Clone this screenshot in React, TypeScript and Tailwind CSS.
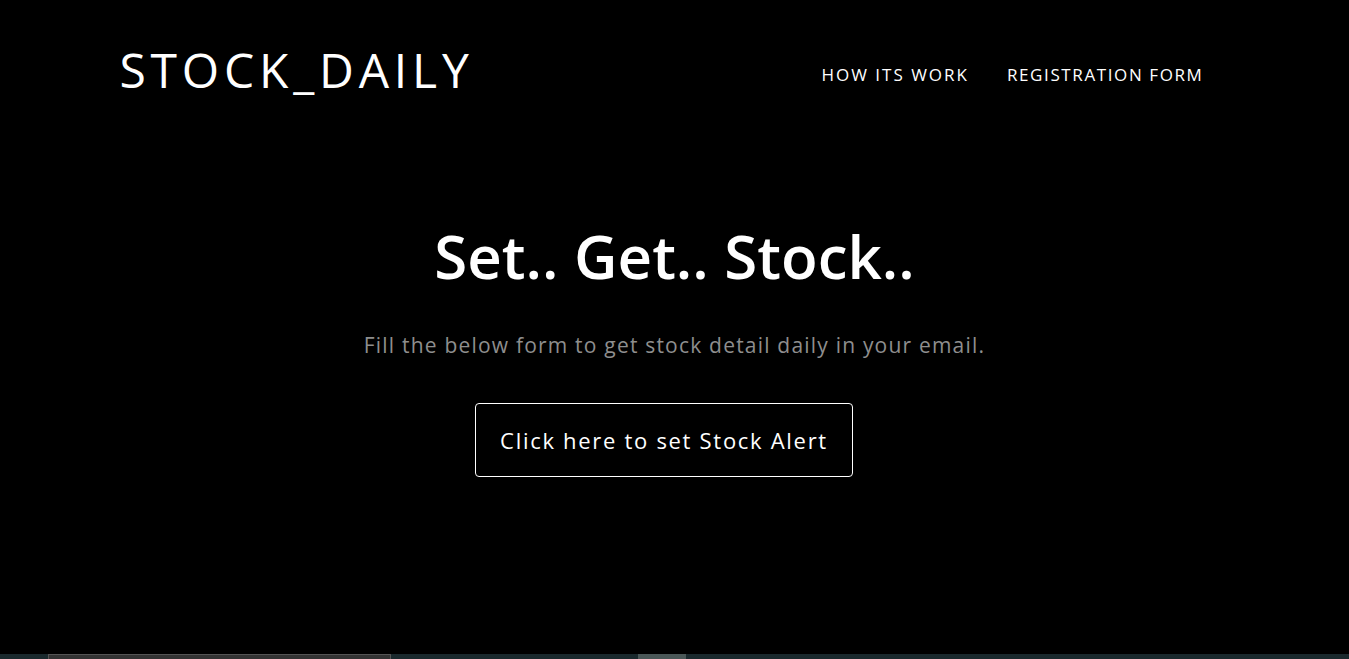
import React from 'react';

const font = { fontFamily: '"Open Sans", "Liberation Sans", sans-serif' };

export default function App() {
  return (
    <div className="min-h-screen bg-[#1a292d]" style={font}>
      <section className="h-[654px] bg-black text-white flex flex-col">
        <header className="mx-auto w-[1140px] px-[15px] flex items-center justify-between pt-[38px]">
          <a className="text-[48px] font-normal leading-[64px] tracking-[4.8px]">STOCK_DAILY</a>
          <nav className="flex items-center gap-[38px] pr-[26px] pt-[10px]">
            <a className="text-[17px] font-normal tracking-[2px]">HOW ITS WORK</a>
            <a className="text-[17px] font-normal tracking-[1.6px]">REGISTRATION FORM</a>
          </nav>
        </header>
        <div className="flex flex-col items-center pt-[118px]">
          <h1 className="text-[60px] font-semibold leading-[72px]">Set.. Get.. Stock..</h1>
          <p className="mt-[38px] text-[21px] text-[#8e8e8e] leading-[30px] tracking-[1.2px]">
            Fill the below form to get stock detail daily in your email.
          </p>
          <button className="mt-[43px] mr-[21px] w-[378px] h-[74px] border border-white rounded-[4px] text-[22px] tracking-[1.7px] text-white">
            Click here to set Stock Alert
          </button>
        </div>
      </section>
      <div className="flex h-[5px]">
        <div className="ml-[48px] w-[343px] bg-[#333] border-t border-x border-[#555]" />
        <div className="ml-[247px] w-[48px] bg-[#4a5757]" />
      </div>
    </div>
  );
}
